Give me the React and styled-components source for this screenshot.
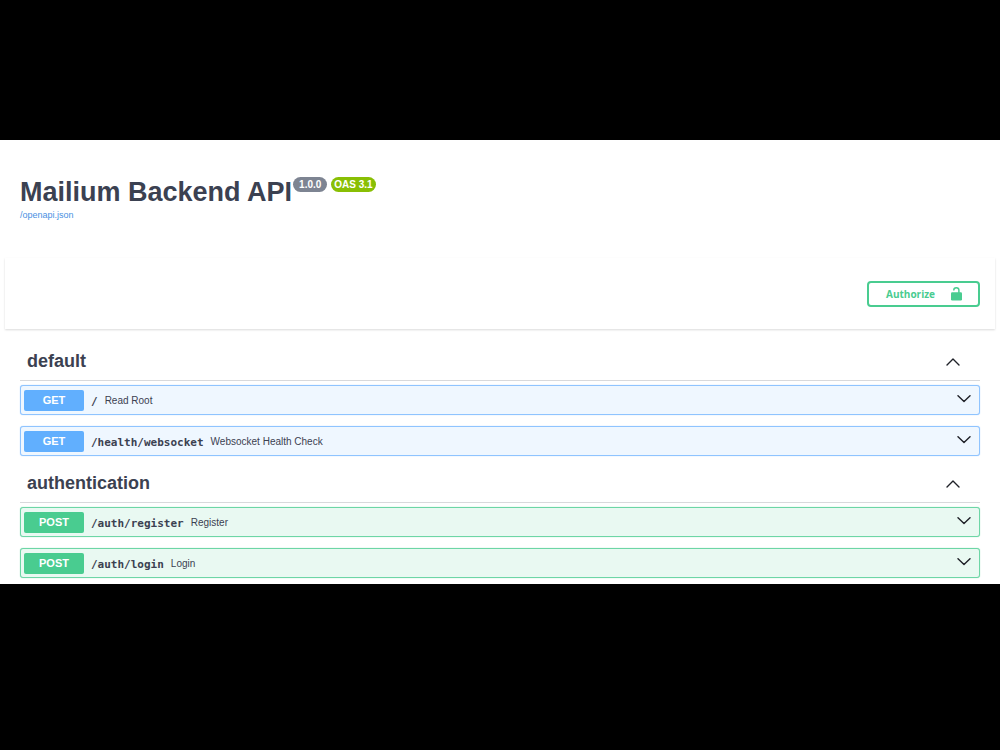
import styled, { createGlobalStyle } from 'styled-components';

const GlobalStyle = createGlobalStyle`
    *{
        box-sizing: border-box;
    }

    body{
        margin: 0;
        background-color: #000;
        color: #3b4151;
        font-family: "Liberation Sans", Arial, sans-serif;
    }
`;

const Screen = styled.div`
    display: flex;
    flex-direction: column;
    justify-content: center;
    min-height: 100vh;
    padding-bottom: 26px;
`;

const Page = styled.main`
    background-color: #fff;
    padding-bottom: 6px;
`;

const Info = styled.header`
    padding: 36px 20px;
`;

const TitleRow = styled.div`
    display: flex;
    align-items: flex-start;
    gap: 1px;
`;

const Title = styled.h1`
    margin: 0;
    font-size: 27px;
    line-height: 32px;
`;

const Badges = styled.div`
    display: flex;
    gap: 4px;
    padding-top: 1px;
`;

const Badge = styled.span`
    padding: 0 ${props => props.$pad};
    border-radius: 8px;
    background-color: ${props => props.$color};
    color: #fff;
    font-size: 10px;
    font-weight: 700;
    line-height: 15px;
`;

const SpecLink = styled.a`
    display: block;
    width: fit-content;
    color: #4990e2;
    font-size: 9px;
    line-height: 14px;
    text-decoration: none;
`;

const Toolbar = styled.section`
    display: flex;
    justify-content: flex-end;
    margin: 0 5px;
    padding: 23px 15px 22px;
    box-shadow: 0 1px 2px rgba(0,0,0,0.15);
`;

const AuthorizeButton = styled.button`
    display: flex;
    align-items: center;
    gap: 16px;
    height: 26px;
    padding: 0 16px 0 17px;
    border: 2px solid #49cc90;
    border-radius: 4px;
    background: transparent;
    color: #49cc90;
    font-family: "Open Sans", sans-serif;
    font-size: 10px;
    font-weight: 700;
    cursor: pointer;
`;

const Sections = styled.div`
    display: grid;
    gap: 7px;
    padding: 12px 20px 0;
`;

const SectionHeader = styled.h2`
    display: flex;
    align-items: center;
    justify-content: space-between;
    height: 40px;
    margin: 0 0 4px;
    padding: 2px 20px 0 7px;
    border-bottom: 1px solid #d8d9dc;
    font-size: 18px;
`;

const ToggleButton = styled.button`
    display: flex;
    padding: 0;
    border: 0;
    background: none;
    color: #1f2128;
    cursor: pointer;
`;

const Operations = styled.div`
    display: grid;
    gap: 11px;
`;

const Operation = styled.div`
    display: flex;
    align-items: center;
    height: 30px;
    padding: 0 8px 0 3px;
    border: 1px solid ${props => props.$post ? '#6dd6a6' : '#8fc4ff'};
    border-radius: 3px;
    background-color: ${props => props.$post ? '#e9f9f2' : '#eff7ff'};
    box-shadow: 0 0 1px ${props => props.$post ? '#6dd6a6' : '#8fc4ff'};
`;

const Method = styled.span`
    width: 60px;
    border-radius: 2px;
    background-color: ${props => props.$post ? '#49cc90' : '#61affe'};
    color: #fff;
    font-size: 11px;
    font-weight: 700;
    line-height: 21px;
    text-align: center;
`;

const Path = styled.span`
    padding: 2px 7px 0;
    font-family: "DejaVu Sans Mono", monospace;
    font-size: 11px;
    font-weight: 700;
`;

const Summary = styled.span`
    flex: 1;
    font-size: 10px;
`;

const Chevron = ({ up }) => (
    <svg width="14" height="10" viewBox="0 0 14 10" fill="none" stroke="currentColor" strokeWidth="1.4" strokeLinecap="round" strokeLinejoin="round" aria-hidden="true">
        <path d={up ? 'M1 8L7 2L13 8' : 'M1 .7L7 6.5L13 .7'} />
    </svg>
);

const LockIcon = () => (
    <svg width="11" height="14" viewBox="0 0 11 14" aria-hidden="true">
        <path d="M2.8 3.4V3.1C2.8 1.7 3.9.8 5.3.8S7.9 1.7 7.9 3.1V6" fill="none" stroke="currentColor" strokeWidth="1.5" />
        <rect y="5.2" width="11" height="8.3" rx="1.2" fill="currentColor" />
    </svg>
);

const sections = [
    {
        name: 'default',
        operations: [
            { method: 'GET', path: '/', summary: 'Read Root' },
            { method: 'GET', path: '/health/websocket', summary: 'Websocket Health Check' },
        ],
    },
    {
        name: 'authentication',
        operations: [
            { method: 'POST', path: '/auth/register', summary: 'Register' },
            { method: 'POST', path: '/auth/login', summary: 'Login' },
        ],
    },
];

const App = () => {
    return (
        <Screen>
            <GlobalStyle />
            <Page>
                <Info>
                    <TitleRow>
                        <Title>Mailium Backend API</Title>
                        <Badges>
                            <Badge $color="#7d8492" $pad="6px">1.0.0</Badge>
                            <Badge $color="#89bf04" $pad="3px">OAS 3.1</Badge>
                        </Badges>
                    </TitleRow>
                    <SpecLink href="/openapi.json">/openapi.json</SpecLink>
                </Info>
                <Toolbar>
                    <AuthorizeButton type="button">
                        Authorize
                        <LockIcon />
                    </AuthorizeButton>
                </Toolbar>
                <Sections>
                    {sections.map(({ name, operations }) => (
                        <section key={name}>
                            <SectionHeader>
                                {name}
                                <ToggleButton type="button" aria-label={`Collapse ${name}`}>
                                    <Chevron up />
                                </ToggleButton>
                            </SectionHeader>
                            <Operations>
                                {operations.map(({ method, path, summary }) => (
                                    <Operation key={path} $post={method === 'POST'}>
                                        <Method $post={method === 'POST'}>{method}</Method>
                                        <Path>{path}</Path>
                                        <Summary>{summary}</Summary>
                                        <ToggleButton type="button" aria-label={`Expand ${path}`}>
                                            <Chevron />
                                        </ToggleButton>
                                    </Operation>
                                ))}
                            </Operations>
                        </section>
                    ))}
                </Sections>
            </Page>
        </Screen>
    );
}

export default App;
